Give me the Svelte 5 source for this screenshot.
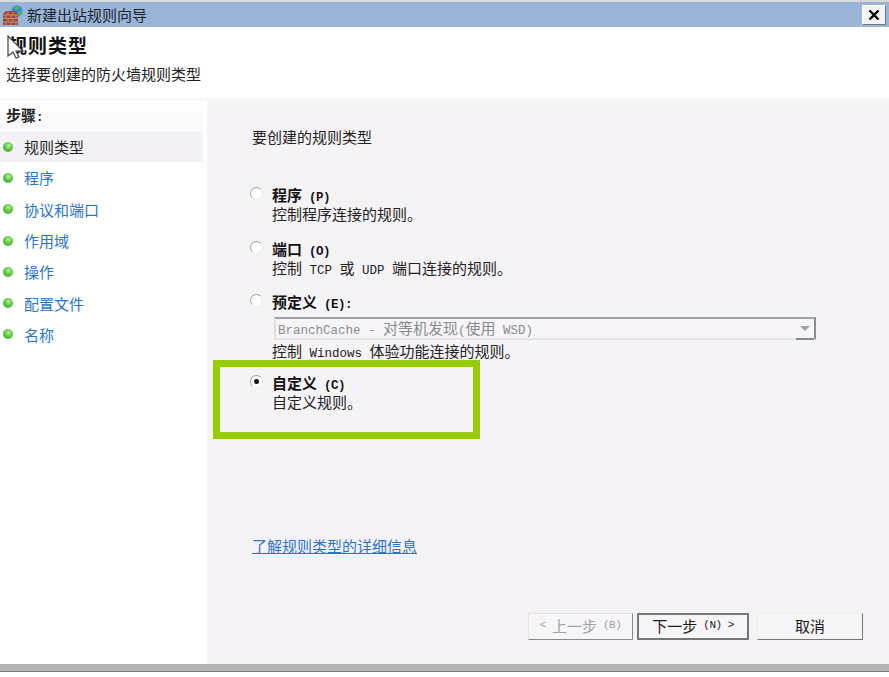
<script>
  const steps = ['规则类型', '程序', '协议和端口', '作用域', '操作', '配置文件', '名称'];
</script>

<div class="window">
  <div class="titlebar">
    <svg class="appicon" width="20" height="20" viewBox="0 0 20 20">
      <circle cx="14" cy="6" r="5.500" fill="#2f8fd8" />
      <path d="M11 2c2-1.200 4-.8 5.500.8-1 1.200-2.500 2.200-4.500 1.700zM15 7l3.800-1.200c.3 2.200-1 4.500-3.300 4.700z" fill="#58b848" />
      <path d="M0 9l3-3h9l3 3v11H0z" fill="#9a4a38" />
      <path d="M0 10h15M0 13.500h15M0 17h15M5 6.500v3.500M10 6.500v3.500M3 10v3.500M8 10v3.500M13 10v3.500M5 13.500v3.500M10 13.500v3.500M3 17v3M8 17v3M13 17v3" stroke="#c98a72" stroke-width="1" fill="none" />
    </svg>
    <span class="title">新建出站规则向导</span>
    <div class="close">
      <svg width="12" height="12" viewBox="0 0 12 12"><path d="M1.500 1.500l9 9M10.500 1.500l-9 9" stroke="#000" stroke-width="2.400" /></svg>
    </div>
  </div>

  <header class="head">
    <h1>规则类型</h1>
    <p>选择要创建的防火墙规则类型</p>
  </header>

  <div class="main">
    <aside class="side">
      <div class="stephead">步骤<span class="m">:</span></div>
      <ul>
        {#each steps as s, i}
          <li class:active={i === 0}><i class="dot"></i><span>{s}</span></li>
        {/each}
      </ul>
    </aside>

    <section class="panel">
      <div class="question">要创建的规则类型</div>

      <div class="opt o1">
        <i class="radio"></i>
        <div>
          <div class="line lab">程序<span class="m">&nbsp;(P)</span></div>
          <div class="line">控制程序连接的规则。</div>
        </div>
      </div>
      <div class="opt o2">
        <i class="radio"></i>
        <div>
          <div class="line lab">端口<span class="m">&nbsp;(O)</span></div>
          <div class="line">控制<span class="m">&nbsp;TCP&nbsp;</span>或<span class="m">&nbsp;UDP&nbsp;</span>端口连接的规则。</div>
        </div>
      </div>
      <div class="opt o3">
        <i class="radio"></i>
        <div class="grow">
          <div class="line lab">预定义<span class="m">&nbsp;(E):</span></div>
          <div class="combo">
            <span class="cval"><span class="m">BranchCache&nbsp;-&nbsp;</span>对等机发现<span class="m">(</span>使用<span class="m">&nbsp;WSD)</span></span>
            <span class="arrow"><i></i></span>
          </div>
          <div class="line">控制<span class="m">&nbsp;Windows&nbsp;</span>体验功能连接的规则。</div>
        </div>
      </div>
      <div class="opt o4">
        <i class="radio on"></i>
        <div>
          <div class="line lab">自定义<span class="m">&nbsp;(C)</span></div>
          <div class="line">自定义规则。</div>
        </div>
      </div>

      <a class="link" href="#top">了解规则类型的详细信息</a>

      <div class="buttons">
        <div class="btn prev"><span class="m">&lt;&nbsp;</span>上一步<span class="m">&nbsp;(B)</span></div>
        <div class="btn next">下一步<span class="m">&nbsp;(N)&nbsp;&gt;</span></div>
        <div class="btn cancel">取消</div>
      </div>
    </section>
  </div>

  <div class="bottom"></div>

  <div class="highlight"></div>
  <svg class="cursor" width="18" height="24" viewBox="0 0 18 24">
    <path d="M1 1v20l5-4 3 6 3-1-3-6h7z" fill="#fff" stroke="#444" stroke-width="1.2" />
  </svg>
</div>

<style>
  :global(body) { margin: 0; background: #fff; }
  .window {
    position: relative;
    width: 889px;
    height: 677px;
    overflow: hidden;
    display: flex;
    flex-direction: column;
    font: 15px/19px "Noto Sans CJK SC", sans-serif;
    color: #222;
    background: #fff;
  }
  .m { font-family: "Liberation Mono", monospace; font-size: 12.5px; line-height: 1; white-space: pre; }
  .line { height: 19px; white-space: nowrap; }
  .titlebar {
    height: 25px;
    border-top: 2px solid #d9d9dc;
    background: #9ab5d5;
    display: flex;
    align-items: center;
    padding: 0 3px 0 3px;
    flex: none;
  }
  .appicon { flex: none; margin-top: 1px; }
  .title { margin-left: 4px; color: #1c2430; }
  .close {
    margin-left: auto;
    width: 24px;
    height: 20px;
    box-sizing: border-box;
    background: #f4f2f4;
    border: 1px solid;
    border-color: #fff #777 #777 #fff;
    display: flex;
    align-items: center;
    justify-content: center;
  }
  .head { height: 71px; padding: 0 6px; flex: none; border-bottom: 3px solid #f6f5f7; box-sizing: content-box; }
  .head h1 { margin: 6px 0 0; font-size: 19px; line-height: 24px; font-weight: 700; letter-spacing: 1px; color: #111; padding-left: 2px; }
  .head p { margin: 7px 0 0; color: #222; }
  .main { flex: 1; display: flex; min-height: 0; }
  .side { width: 203px; flex: none; margin-right: 4px; }
  .stephead {
    height: 28px;
    line-height: 28px;
    padding-left: 6px;
    font-weight: 700;
    background: linear-gradient(#fff, #f8f7f9);
  }
  .side ul { list-style: none; margin: 2px 0 0; padding: 0; }
  .side li {
    height: 31.3px;
    display: flex;
    align-items: center;
    color: #2a74cf;
  }
  .side li.active { color: #222; background: #f5f2f7; }
  .dot {
    width: 10px;
    height: 10px;
    margin-left: 3px;
    margin-right: 11px;
    border-radius: 50%;
    background: radial-gradient(circle at 55% 35%, #b9ee9c 0, #55c43a 50%, #3f9f2c 100%);
    flex: none;
  }
  .panel {
    flex: 1;
    background: #f6f3f7;
    padding: 26px 73px 24px 45px;
    display: flex;
    flex-direction: column;
  }
  .question { line-height: 20px; }
  .opt { display: flex; align-items: flex-start; margin-left: -2px; }
  .opt > div:last-child { margin-left: 9px; }
  .o1 { margin-top: 38px; }
  .o2 { margin-top: 16px; }
  .o3 { margin-top: 15px; }
  .o4 { margin-top: 13px; }
  .grow { flex: 1; }
  .lab { font-weight: 700; color: #111; }
  .lab .m { letter-spacing: -0.5px; }
  .radio {
    width: 13px;
    height: 13px;
    margin-top: 2px;
    box-sizing: border-box;
    flex: none;
    position: relative;
    border-radius: 50%;
    border: 1.5px solid #a5a3a8;
    border-right-color: #e8e6ea;
    border-bottom-color: #f1eff3;
    background: #fff;
  }
  .radio.on::after {
    content: "";
    position: absolute;
    left: 2.5px;
    top: 2.5px;
    width: 5px;
    height: 5px;
    border-radius: 50%;
    background: #111;
  }
  .combo {
    height: 23px;
    box-sizing: border-box;
    margin: 6px 0 1px 2px;
    border: 2px solid;
    border-color: #a3a3a6 #8c8c8f #e8e6ea #e0dee2;
    display: flex;
    align-items: center;
    color: #8a8a8d;
    background: #f7f5f9;
    position: relative;
  }
  .cval { padding-left: 2px; line-height: 18px; white-space: nowrap; }
  .arrow {
    position: absolute;
    right: 0;
    top: 0;
    bottom: -2px;
    width: 18px;
    box-sizing: border-box;
    background: #f7f5f9;
    display: flex;
    align-items: center;
    justify-content: center;
    border-bottom: 2px solid #8c8c8f;
  }
  .arrow i {
    width: 0;
    height: 0;
    border-left: 5px solid transparent;
    border-right: 5px solid transparent;
    border-top: 5px solid #a0a0a3;
  }
  .link {
    margin-top: 125px;
    line-height: 19px;
    height: 19px;
    align-self: flex-start;
    color: #2a74cf;
    text-decoration: underline;
  }
  .buttons { margin-top: auto; display: flex; justify-content: flex-end; margin-right: -47px; }
  .btn {
    height: 27px;
    flex: none;
    box-sizing: border-box;
    padding-bottom: 3px;
    border: 1px solid;
    border-color: #eee #777 #777 #eee;
    background: #f7f5f8;
    display: flex;
    align-items: center;
    justify-content: center;
    white-space: pre;
    color: #1a1a1a;
  }
  .btn .m { font-size: 11px; letter-spacing: -0.5px; }
  .prev { width: 105px; color: #a2a0a5; border-color: #e4e2e6 #8a8a8d #8a8a8d #e4e2e6; }
  .next { width: 112px; margin-left: 4px; border: 2px solid #77777a; }
  .cancel { width: 106px; margin-left: 8px; }
  .bottom {
    height: 8px;
    flex: none;
    margin-bottom: 5px;
    box-sizing: border-box;
    background: #b4b4b4;
    border-bottom: 1px solid #7d7d7d;
  }
  .highlight {
    position: absolute;
    left: 213px;
    top: 360px;
    width: 267px;
    height: 79px;
    box-sizing: border-box;
    border: 7px solid #97cc00;
    pointer-events: none;
  }
  .cursor { position: absolute; left: 7px; top: 35px; }
</style>
